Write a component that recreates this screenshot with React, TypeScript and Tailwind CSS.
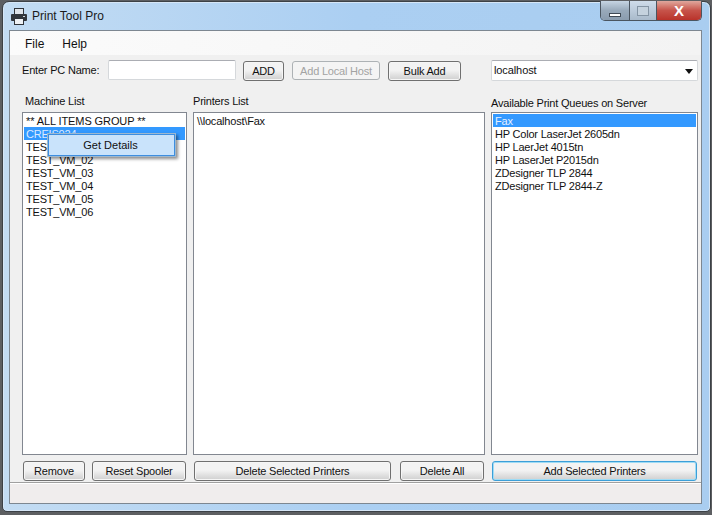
const machines = ["TEST_VM_01", "TEST_VM_02", "TEST_VM_03", "TEST_VM_04", "TEST_VM_05", "TEST_VM_06"];
const queues = [
  "HP Color LaserJet 2605dn",
  "HP LaerJet 4015tn",
  "HP LaserJet P2015dn",
  "ZDesigner TLP 2844",
  "ZDesigner TLP 2844-Z",
];

const btnBase =
  "h-[20px] rounded-[3px] border bg-gradient-to-b from-[#f3f3f3] from-45% to-[#cfcfcf] text-[11px] leading-[16px] tracking-[-0.2px] text-[#111]";
const btn = `${btnBase} border-[#707070] shadow-[inset_0_0_0_1px_#f6f6f6]`;

function PrinterIcon() {
  return (
    <svg width="16" height="17" viewBox="0 0 16 17" className="shrink-0">
      <rect x="3" y="0" width="10" height="6" fill="#30343a" />
      <rect x="4" y="1" width="8" height="5" fill="#dfe4ea" />
      <rect x="0" y="6" width="16" height="7" rx="1" fill="#32363c" />
      <rect x="12" y="8" width="2" height="1" fill="#cfd6dd" />
      <rect x="3" y="10" width="10" height="7" fill="#30343a" />
      <rect x="4" y="11" width="8" height="5" fill="#eef1f4" />
    </svg>
  );
}

function ListBox({ children }: { children: React.ReactNode }) {
  return <div className="h-[343px] w-full border border-[#828790] bg-white px-px pt-px">{children}</div>;
}

function Row({ text }: { text: string }) {
  return <div className="h-[13px] pl-[2px] text-[11px] leading-[15px] tracking-[-0.2px] text-[#111]">{text}</div>;
}

export default function App() {
  return (
    <div className="relative h-[515px] w-[712px] overflow-hidden bg-[#5d5f62] font-['Liberation_Sans',sans-serif]">
      <div className="mt-px mr-px ml-[2px] h-[511px] rounded-t-[7px] rounded-b-[5px] border border-[#3c4146] bg-gradient-to-r from-[#c3dcf3] via-[#abcff2] to-[#a9cdf0] pr-[8px] pb-[6px] pl-[6px] shadow-[inset_0_0_0_1px_#d6e6f6]">
        <div className="relative flex h-[28px] items-center pl-[2px]">
          <PrinterIcon />
          <span className="ml-[5px] text-[12px] text-[#1a1a1a]">Print Tool Pro</span>
          <div className="absolute top-[-1px] right-0 flex h-[20px] w-[102px] overflow-hidden rounded-b-[5px] border border-t-0 border-[#4a5560]">
            <div className="flex w-[29px] items-end justify-center border-r border-[#4a5560] bg-gradient-to-b from-[#c6d5e3] via-[#98a9ba] to-[#8a9cae] pb-[3px]">
              <div className="h-[4px] w-[12px] border border-[#404a55] bg-white" />
            </div>
            <div className="flex w-[27px] items-center justify-center border-r border-[#4a5560] bg-gradient-to-b from-[#cfdcea] to-[#a9bacb]">
              <div className="h-[10px] w-[12px] border border-[#8595a5] bg-[#c5d2de]" />
            </div>
            <div className="flex flex-1 items-center justify-center bg-gradient-to-b from-[#dfa79d] via-[#c6534a] to-[#b9322a]">
              <span className="text-[15px] leading-[15px] font-bold text-white">X</span>
            </div>
          </div>
        </div>

        <div className="h-[474px] border border-[#7d8791] bg-[#f0f0f0]">
          <div className="flex h-[24px] items-center gap-[18px] bg-gradient-to-r from-[#fbfbfb] to-[#f3f3f3] pt-[1px] pl-[15px] text-[12px] text-[#111]">
            <span>File</span>
            <span>Help</span>
          </div>

          <div className="flex items-start pt-[5px] pl-[12px]">
            <span className="mt-[4px] w-[86px] text-[11px] leading-[13px] tracking-[-0.2px] text-[#111]">Enter PC Name:</span>
            <div className="h-[20px] w-[128px] rounded-[2px] border border-[#d5d8db] border-t-[#abadb3] bg-white" />
            <button className={`${btn} mt-px ml-[7px] h-[19px] w-[41px]`}>ADD</button>
            <button className="mt-px ml-[8px] h-[19px] w-[88px] rounded-[3px] border border-[#adb2b5] bg-[#f4f4f4] text-[11px] leading-[16px] tracking-[-0.2px] text-[#a3a3a3]">
              Add Local Host
            </button>
            <button className={`${btn} mt-px ml-[8px] h-[19px] w-[73px]`}>Bulk Add</button>
            <div className="ml-[30px] flex h-[21px] w-[207px] items-center justify-between rounded-[2px] border border-[#d5d8db] border-t-[#abadb3] bg-white pr-[3px] pl-[2px] text-[11px] tracking-[-0.1px] text-[#111]">
              <span>localhost</span>
              <svg width="8" height="5" viewBox="0 0 8 5" className="mt-px mr-px">
                <path d="M0 0h8L4 5z" fill="#111" />
              </svg>
            </div>
          </div>

          <div className="mt-[14px] flex pl-[12px]">
            <div className="relative w-[165px]">
              <div className="h-[17px] pl-[3px] text-[11px] leading-[13px] tracking-[-0.2px] text-[#111]">Machine List</div>
              <ListBox>
                <div className="h-[13px] pl-[2px] text-[11px] leading-[15px] tracking-[-0.1px] text-[#111]">** ALL ITEMS GROUP **</div>
                <div className="h-[13px] bg-[#3399ff] pl-[2px] text-[11px] leading-[15px] tracking-[-0.2px] text-[#dbeaff]">CREIS024</div>
                {machines.map((m) => (
                  <Row key={m} text={m} />
                ))}
              </ListBox>
              <div className="absolute top-[38px] left-[25px] flex h-[24px] w-[129px] items-center justify-center border border-[#9db8cf] bg-[#c9e3fb] pr-[2px] text-[11px] text-[#111] shadow-[inset_0_0_0_1px_#3d8ee0,2px_2px_3px_rgba(0,0,0,0.45)]">
                Get Details
              </div>
            </div>
            <div className="ml-[6px] w-[292px]">
              <div className="h-[17px] text-[11px] leading-[13px] tracking-[-0.2px] text-[#111]">Printers List</div>
              <ListBox>
                <Row text="\\localhost\Fax" />
              </ListBox>
            </div>
            <div className="ml-[6px] w-[207px]">
              <div className="h-[17px] pt-[2px] text-[11px] leading-[13px] tracking-[-0.2px] text-[#111]">Available Print Queues on Server</div>
              <ListBox>
                <div className="h-[13px] bg-[#3399ff] pl-[2px] text-[11px] leading-[15px] tracking-[-0.2px] text-[#e6f0ff]">Fax</div>
                {queues.map((q) => (
                  <Row key={q} text={q} />
                ))}
              </ListBox>
            </div>
          </div>

          <div className="mt-[6px] flex pl-[13px]">
            <button className={`${btn} w-[62px]`}>Remove</button>
            <button className={`${btn} ml-[7px] w-[94px]`}>Reset Spooler</button>
            <button className={`${btn} ml-[8px] w-[197px]`}>Delete Selected Printers</button>
            <button className={`${btn} ml-[9px] w-[84px]`}>Delete All</button>
            <button className={`${btnBase} ml-[8px] w-[205px] border-[#3c9fd8] shadow-[inset_0_0_0_1px_#9fdcf5]`}>
              Add Selected Printers
            </button>
          </div>

          <div className="mt-px h-[21px] border-t border-[#a0a0a0] bg-[#f0eded] shadow-[inset_0_1px_0_#ffffff]" />
        </div>
      </div>
    </div>
  );
}
